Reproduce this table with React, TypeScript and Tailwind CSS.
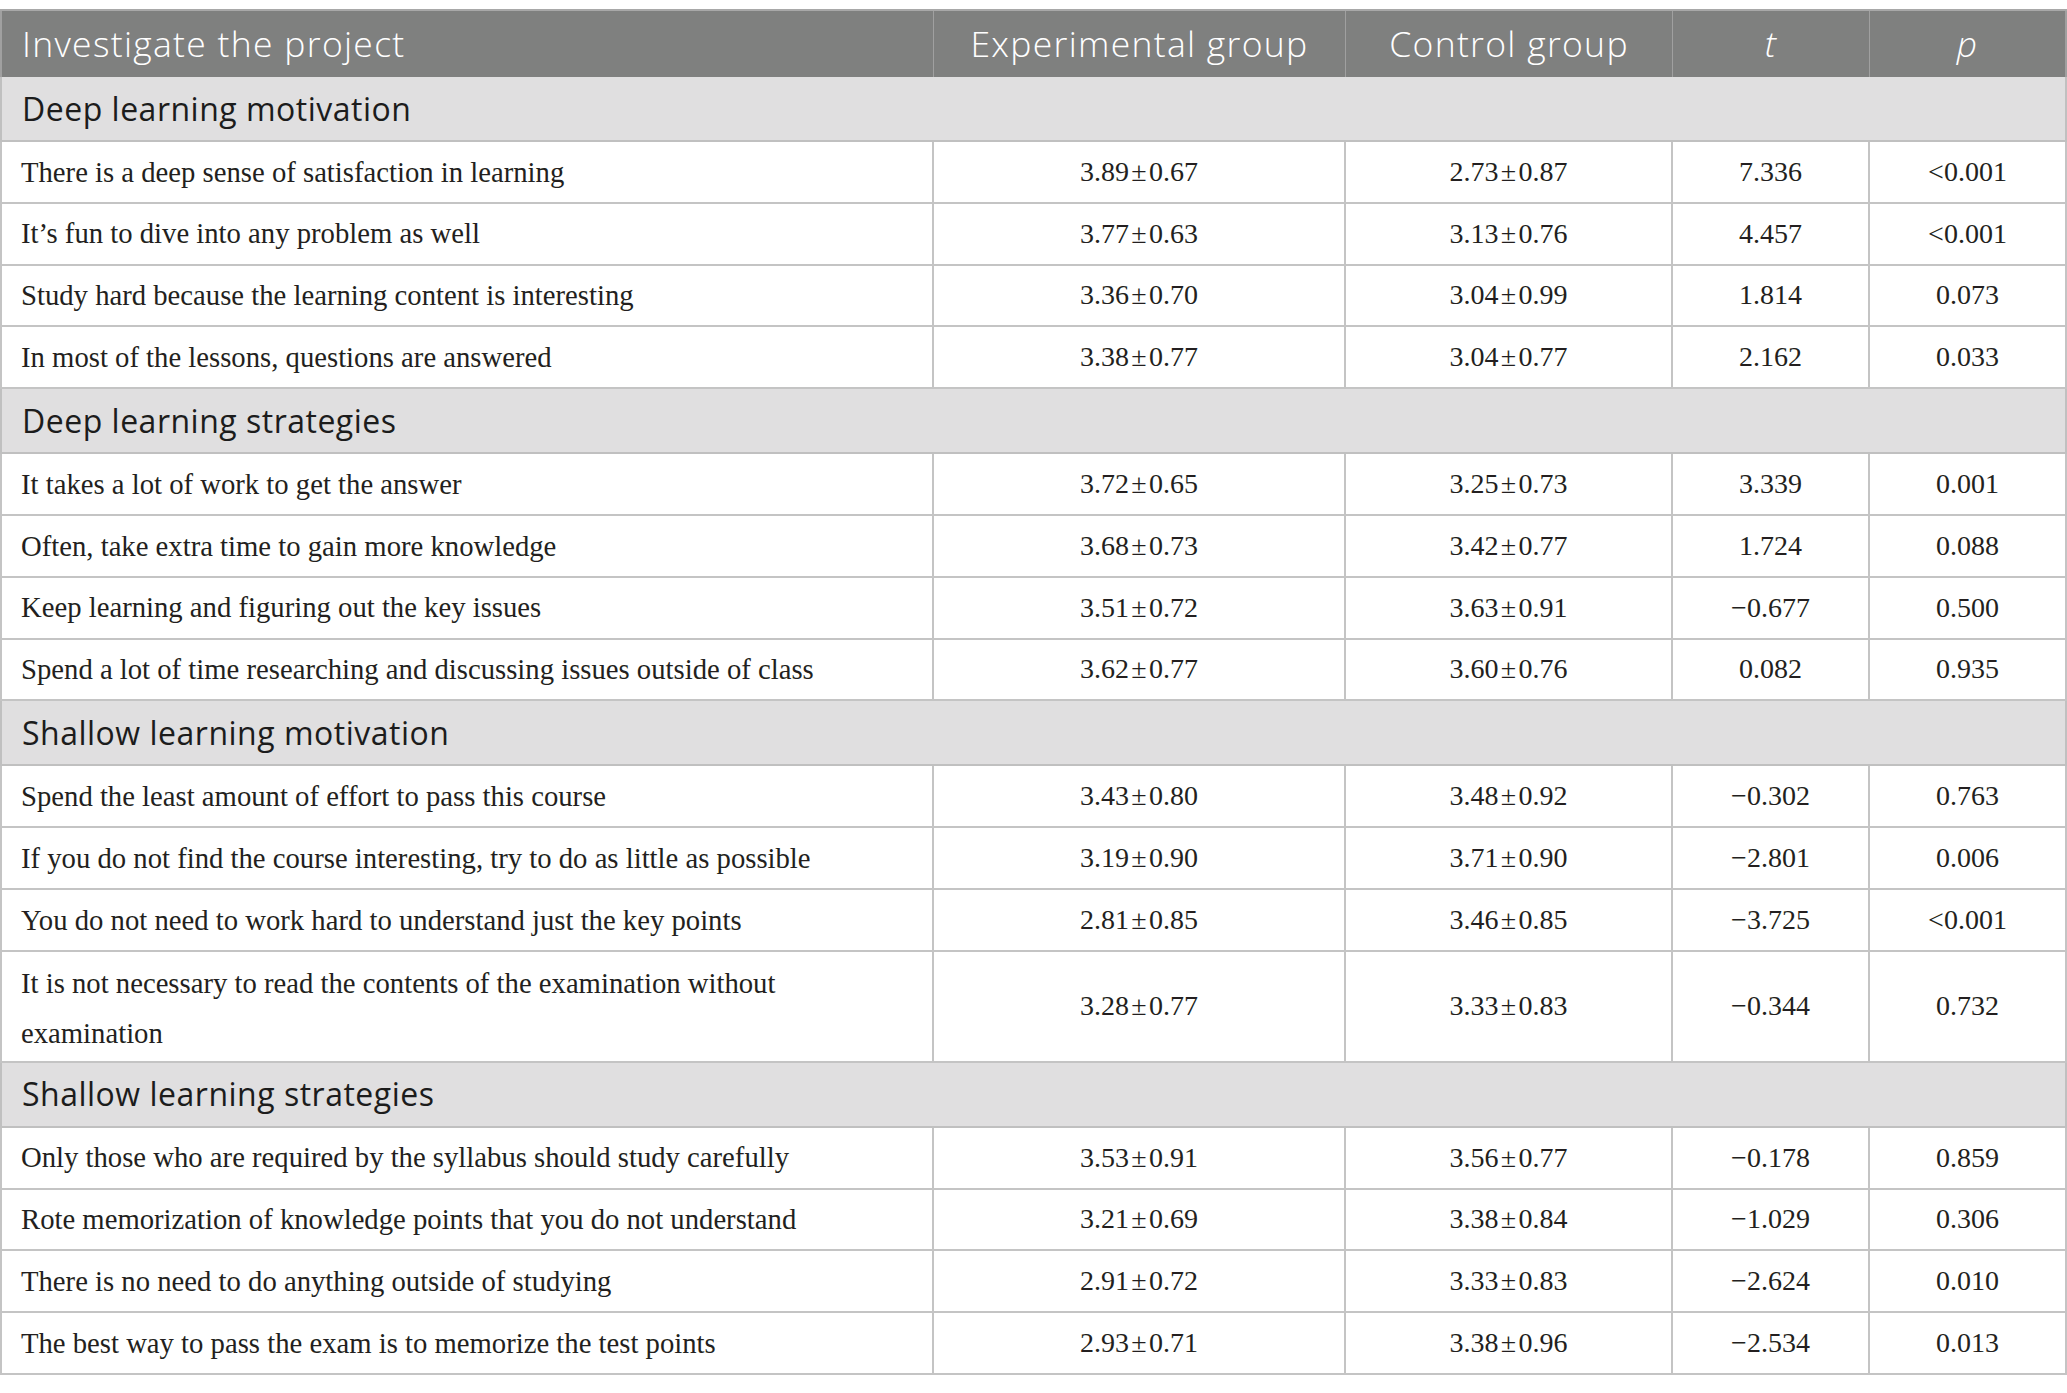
import React from "react";

type Row = { label: React.ReactNode; exp: string; ctrl: string; t: string; p: string; tall?: boolean };
type Section = { title: string; rows: Row[] };

const pm = (a: string, b: string) => `${a}\u200A±\u200A${b}`;

const sections: Section[] = [
  {
    title: "Deep learning motivation",
    rows: [
      { label: "There is a deep sense of satisfaction in learning", exp: pm("3.89", "0.67"), ctrl: pm("2.73", "0.87"), t: "7.336", p: "<0.001" },
      { label: "It’s fun to dive into any problem as well", exp: pm("3.77", "0.63"), ctrl: pm("3.13", "0.76"), t: "4.457", p: "<0.001" },
      { label: "Study hard because the learning content is interesting", exp: pm("3.36", "0.70"), ctrl: pm("3.04", "0.99"), t: "1.814", p: "0.073" },
      { label: "In most of the lessons, questions are answered", exp: pm("3.38", "0.77"), ctrl: pm("3.04", "0.77"), t: "2.162", p: "0.033" },
    ],
  },
  {
    title: "Deep learning strategies",
    rows: [
      { label: "It takes a lot of work to get the answer", exp: pm("3.72", "0.65"), ctrl: pm("3.25", "0.73"), t: "3.339", p: "0.001" },
      { label: "Often, take extra time to gain more knowledge", exp: pm("3.68", "0.73"), ctrl: pm("3.42", "0.77"), t: "1.724", p: "0.088" },
      { label: "Keep learning and figuring out the key issues", exp: pm("3.51", "0.72"), ctrl: pm("3.63", "0.91"), t: "\u22120.677", p: "0.500" },
      { label: "Spend a lot of time researching and discussing issues outside of class", exp: pm("3.62", "0.77"), ctrl: pm("3.60", "0.76"), t: "0.082", p: "0.935" },
    ],
  },
  {
    title: "Shallow learning motivation",
    rows: [
      { label: "Spend the least amount of effort to pass this course", exp: pm("3.43", "0.80"), ctrl: pm("3.48", "0.92"), t: "\u22120.302", p: "0.763" },
      { label: "If you do not find the course interesting, try to do as little as possible", exp: pm("3.19", "0.90"), ctrl: pm("3.71", "0.90"), t: "\u22122.801", p: "0.006" },
      { label: "You do not need to work hard to understand just the key points", exp: pm("2.81", "0.85"), ctrl: pm("3.46", "0.85"), t: "\u22123.725", p: "<0.001" },
      {
        label: (
          <>
            It is not necessary to read the contents of the examination without
            <br />
            examination
          </>
        ),
        exp: pm("3.28", "0.77"),
        ctrl: pm("3.33", "0.83"),
        t: "\u22120.344",
        p: "0.732",
        tall: true,
      },
    ],
  },
  {
    title: "Shallow learning strategies",
    rows: [
      { label: "Only those who are required by the syllabus should study carefully", exp: pm("3.53", "0.91"), ctrl: pm("3.56", "0.77"), t: "\u22120.178", p: "0.859" },
      { label: "Rote memorization of knowledge points that you do not understand", exp: pm("3.21", "0.69"), ctrl: pm("3.38", "0.84"), t: "\u22121.029", p: "0.306" },
      { label: "There is no need to do anything outside of studying", exp: pm("2.91", "0.72"), ctrl: pm("3.33", "0.83"), t: "\u22122.624", p: "0.010" },
      { label: "The best way to pass the exam is to memorize the test points", exp: pm("2.93", "0.71"), ctrl: pm("3.38", "0.96"), t: "\u22122.534", p: "0.013" },
    ],
  },
];

const sans = "font-['Open_Sans',_'Noto_Sans',_sans-serif]";
const serif = "font-['Liberation_Serif',_'Times_New_Roman',_serif]";

function DataRow({ r }: { r: Row }) {
  const h = r.tall ? "h-[111px]" : "h-[61.8px]";
  const cell = `flex items-center justify-center border-r-2 border-b-2 border-[#c4c4c4] ${h}`;
  return (
    <div className={`flex text-[28.7px] text-[#231f20] ${serif}`}>
      <div className={`w-[934px] flex items-center border-l-2 border-r-2 border-b-2 border-[#c4c4c4] pl-[19px] ${h} ${r.tall ? "leading-[50px] pt-[4px]" : "leading-none"}`}>
        <div>{r.label}</div>
      </div>
      <div className={`w-[412px] text-[28px] ${cell}`}>{r.exp}</div>
      <div className={`w-[327px] text-[28px] ${cell}`}>{r.ctrl}</div>
      <div className={`w-[197px] text-[28px] ${cell}`}>{r.t}</div>
      <div className={`w-[197px] text-[28px] ${cell}`}>{r.p}</div>
    </div>
  );
}

export default function App() {
  return (
    <div className="w-[2067px] h-[1393px] bg-white pt-[9px]">
      <div className="w-[2067px]">
        <div className={`flex h-[68px] bg-[#7f807f] text-white text-[35.5px] font-light tracking-[1.3px] ${sans} border-t-2 border-[#a8a8a8]`}>
          <div className="w-[934px] flex items-center pl-[20px] border-l-2 border-r border-[#a0a0a0]">Investigate the project</div>
          <div className="w-[412px] flex items-center justify-center border-r border-[#a0a0a0]">Experimental group</div>
          <div className="w-[327px] flex items-center justify-center border-r border-[#a0a0a0]">Control group</div>
          <div className="w-[197px] flex items-center justify-center border-r border-[#a0a0a0] italic">t</div>
          <div className="w-[197px] flex items-center justify-center border-r-2 border-[#a0a0a0] italic">p</div>
        </div>
        {sections.map((s) => (
          <React.Fragment key={s.title}>
            <div className={`h-[65px] flex items-center pl-[20px] bg-[#e0dfe0] text-[#1c1c1c] text-[32px] tracking-[0.5px] ${sans} border-l-2 border-r-2 border-b-2 border-[#c0c0c0]`}>
              {s.title}
            </div>
            {s.rows.map((r, i) => (
              <DataRow key={i} r={r} />
            ))}
          </React.Fragment>
        ))}
      </div>
    </div>
  );
}
